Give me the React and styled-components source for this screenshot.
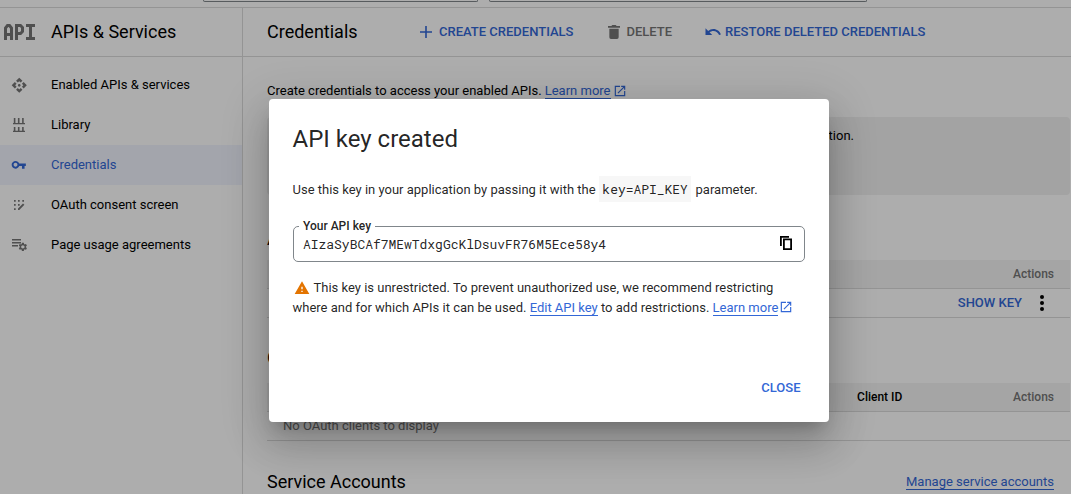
import React from "react";
import styled, { createGlobalStyle } from "styled-components";

const Global = createGlobalStyle`
  *, *::before, *::after { box-sizing: border-box; }
  html, body { margin: 0; height: 100%; overflow: hidden; background: #fff; }
  body { font-family: Roboto, "Liberation Sans", sans-serif; font-size: 13px; color: rgba(0,0,0,.87); }
  svg { display: block; flex: none; fill: currentColor; }
`;

const BLUE = "#3367d6";
const LINE = "#dadada";

const Page = styled.div`
  height: 494px;
  overflow: hidden;
  display: flex;
  flex-direction: column;
  color: #000;
`;
const TopBar = styled.div`
  height: 8px;
  flex: none;
  display: flex;
  gap: 11px;
  padding-left: 203px;
  border-bottom: 1px solid ${LINE};
`;
const TopField = styled.div`
  width: ${(p) => p.$width}px;
  height: 2px;
  border: 1px solid #80868b;
  border-top: 0;
  border-radius: 0 0 4px 4px;
`;
const Columns = styled.div`
  flex: 1;
  display: flex;
  min-height: 0;
`;
const Sidebar = styled.aside`
  width: 243px;
  flex: none;
  border-right: 1px solid ${LINE};
`;
const SideHeader = styled.header`
  height: 49px;
  display: flex;
  align-items: center;
  padding-left: 4px;
  border-bottom: 1px solid ${LINE};
  color: #757575;
`;
const Title = styled.h1`
  margin: 0;
  font-size: 18px;
  font-weight: 400;
  line-height: 24px;
  color: #000;
  width: ${(p) => (p.$width ? `${p.$width}px` : "auto")};
  padding-left: ${(p) => p.$indent || 0}px;
`;
const Nav = styled.nav`
  padding-top: 8px;
`;
const NavItem = styled.div`
  height: 40px;
  display: flex;
  align-items: center;
  gap: 23px;
  padding-left: 10px;
  color: ${(p) => (p.$active ? BLUE : "#000")};
  background: ${(p) => (p.$active ? "#f0f4fe" : "transparent")};
  svg { color: ${(p) => (p.$active ? BLUE : "#757575")}; }
`;
const NavIcon = styled.span`
  width: 18px;
  display: flex;
  justify-content: center;
`;
const Label = styled.span`
  padding-bottom: 2px;
`;
const Main = styled.main`
  flex: 1;
  min-width: 0;
`;
const Toolbar = styled.header`
  height: 49px;
  display: flex;
  align-items: center;
  padding-left: 24px;
  border-bottom: 1px solid ${LINE};
`;
const ToolButton = styled.div`
  display: flex;
  align-items: center;
  gap: ${(p) => p.$gap}px;
  margin-left: ${(p) => p.$offset}px;
  padding-bottom: 1px;
  font-weight: 500;
  white-space: nowrap;
  color: ${(p) => (p.$disabled ? "#757575" : BLUE)};
`;
const Content = styled.div`
  padding: 24px 1px 0 24px;
`;
const Intro = styled.p`
  margin: 0 0 16px;
  display: flex;
  line-height: 20px;
`;
const Link = styled.a`
  color: ${BLUE};
  line-height: 15px;
  border-bottom: 1px solid ${BLUE};
`;
const IntroLink = styled(Link)`
  height: 18px;
  margin-left: 3px;
  line-height: 20px;
`;
const LinkIcon = styled.span`
  display: inline-block;
  vertical-align: -2px;
  margin-left: 1px;
  color: ${BLUE};
`;
const IntroLinkIcon = styled(LinkIcon)`
  padding-top: 3px;
  margin-left: 2px;
`;
const Notice = styled.div`
  height: 78px;
  padding: 9px 216px 0 0;
  line-height: 20px;
  text-align: right;
  background: #f1f1f1;
  border-radius: 4px;
`;
const Section = styled.h2`
  height: ${(p) => p.$height}px;
  margin: 0;
  padding-top: ${(p) => p.$top}px;
  font-size: 18px;
  font-weight: 400;
  line-height: 24px;
`;
const TableHead = styled.div`
  height: 29px;
  display: flex;
  align-items: center;
  justify-content: flex-end;
  padding-right: 16px;
  font-size: 12px;
  font-weight: 500;
  color: #757575;
  background: #f3f3f3;
  border-bottom: 1px solid ${LINE};
`;
const HeadCell = styled.span`
  width: 156px;
  color: #000;
`;
const TableRow = styled.div`
  height: 29px;
  display: flex;
  align-items: center;
  justify-content: ${(p) => (p.$end ? "flex-end" : "flex-start")};
  padding: 0 16px;
  color: #757575;
  border-bottom: 1px solid ${LINE};
`;
const ShowKey = styled(Label)`
  color: ${BLUE};
  font-weight: 500;
  margin-right: 8px;
`;
const Kebab = styled.svg`
  color: #000;
`;
const SectionLine = styled.div`
  display: flex;
  justify-content: space-between;
  align-items: center;
  padding: 29px 16px 0 0;
`;

const Backdrop = styled.div`
  position: absolute;
  inset: 0;
  padding: 99px 0 0 269px;
  background: rgba(0, 0, 0, 0.32);
`;
const Dialog = styled.section`
  width: 560px;
  height: 323px;
  padding: 24px;
  display: flex;
  flex-direction: column;
  background: #fff;
  border-radius: 4px;
  box-shadow: 0 11px 15px -7px rgba(0,0,0,.2), 0 24px 38px 3px rgba(0,0,0,.14), 0 9px 46px 8px rgba(0,0,0,.12);
`;
const DialogTitle = styled.h2`
  margin: 0 0 0 -0.5px;
  font-size: 24px;
  font-weight: 400;
  line-height: 32px;
`;
const Paragraph = styled.p`
  margin: ${(p) => p.$top}px 0 0 -0.5px;
  line-height: 20px;
  white-space: nowrap;
`;
const Code = styled.code`
  display: inline-block;
  margin: 0 1px 0 0;
  padding: 3px 3.5px;
  font: 13px/20px "Roboto Mono", "DejaVu Sans Mono", monospace;
  letter-spacing: -0.03px;
  background: #f7f7f7;
`;
const KeyField = styled.fieldset`
  height: 43px;
  margin: 17px 0 0;
  padding: 0 10px 0 9px;
  min-width: 0;
  border: 1px solid #80868b;
  border-radius: 5px;
`;
const KeyLegend = styled.legend`
  margin-left: -4px;
  padding: 0 4px;
  font-size: 12px;
  font-weight: 500;
  line-height: 14px;
`;
const KeyLine = styled.div`
  display: flex;
  justify-content: space-between;
  align-items: center;
  height: 22px;
  font: 13px/20px "Roboto Mono", "DejaVu Sans Mono", monospace;
  letter-spacing: -0.03px;
`;
const CopyGlyph = styled.svg`
  margin: 0 2px 3px 0;
  color: #000;
`;
const WarningIcon = styled.svg`
  && { display: inline-block; }
  width: 16px;
  height: 16px;
  margin: 0 4px 0 1px;
  vertical-align: -4px;
  color: #e37400;
`;
const Actions = styled.footer`
  margin-top: auto;
  display: flex;
  justify-content: flex-end;
  padding-right: 4.5px;
  font-weight: 500;
  line-height: 20px;
  color: ${BLUE};
`;

const Icon = ({ d, size = 18 }) => (
  <svg width={size} height={size} viewBox="0 0 24 24">
    <path d={d} />
  </svg>
);

const LogoMark = styled.svg`
  && { fill: none; }
  stroke: currentColor;
  stroke-width: 3;
`;

const ApiLogo = () => (
  <LogoMark width="31" height="16" viewBox="0 0 31 16">
    <path d="M1.500 16V4L3.500 1.500H5.500L7.500 4V16M1.500 10.500H7.500" />
    <path d="M12.500 16V1.500H16.500L18.500 3.500V7.500L16.500 9.500H12.500" />
    <path d="M22 1.500H31M26.500 1.500V14.500M22 14.500H31" />
  </LogoMark>
);

const LibraryIcon = () => (
  <svg width="18" height="18" viewBox="0 0 18 18">
    <path d="M3 7h12v1.300H3zM3 14.700h12V16H3zM3.800 2h1.600v5H3.800zM7.900 2h1.600v5H7.900zM12.100 2h1.600v5h-1.600zM3.800 11h1.600v4H3.800zM7.900 11h1.600v4H7.900zM12.100 11h1.600v4h-1.600z" />
  </svg>
);

const ConsentIcon = () => (
  <svg width="18" height="18" viewBox="0 0 18 18">
    <path d="M4 4h1.700v1.700H4zM8 4h1.700v1.700H8zM12.300 4H14v1.700h-1.700zM4 8h1.700v1.700H4zM8 8h1.700v1.700H8zM4 12.300h1.700V14H4zM8 14v-1.600l5-5L14.400 8.800 9.300 14z" />
  </svg>
);

const GEAR = "M19.140 12.940c.04-.3.06-.61.06-.94s-.02-.64-.07-.94l2.030-1.580c.18-.14.23-.41.12-.61l-1.920-3.320c-.12-.22-.37-.29-.59-.22l-2.390.96c-.5-.38-1.030-.7-1.620-.94l-.36-2.540c-.04-.24-.24-.41-.48-.41h-3.840c-.24 0-.43.17-.47.41l-.36 2.540c-.59.24-1.130.57-1.620.94l-2.390-.96c-.22-.08-.47 0-.59.22L2.740 8.870c-.12.21-.08.47.12.61l2.030 1.580c-.05.3-.09.63-.09.94s.02.64.07.94l-2.030 1.580c-.18.14-.23.41-.12.61l1.920 3.320c.12.22.37.29.59.22l2.390-.96c.5.38 1.030.7 1.620.94l.36 2.540c.05.24.24.41.48.41h3.840c.24 0 .44-.17.47-.41l.36-2.540c.59-.24 1.130-.56 1.620-.94l2.390.96c.22.08.47 0 .59-.22l1.920-3.320c.12-.22.07-.47-.12-.61l-2.010-1.580zM12 16c-2.200 0-4-1.800-4-4s1.800-4 4-4 4 1.800 4 4-1.800 4-4 4z";

const AgreementIcon = () => (
  <svg width="18" height="18" viewBox="0 0 18 18">
    <path d="M2 3h9v1.500H2zM2 6h9v1.500H2zM2 9h6v1.500H2z" />
    <g transform="translate(7.700 5.700) scale(.43)">
      <path d={GEAR} />
    </g>
  </svg>
);

const ENABLED = "M14 12c0 1.100-.9 2-2 2s-2-.9-2-2 .9-2 2-2 2 .9 2 2zm-2-6l2.120 2.120 2.500-2.500L12 1 7.380 5.620l2.500 2.500L12 6zm-6 6l2.120-2.120-2.500-2.500L1 12l4.620 4.620 2.500-2.500L6 12zm12 0l-2.120 2.120 2.500 2.500L23 12l-4.620-4.620-2.500 2.500L18 12zm-6 6l-2.120-2.120-2.500 2.500L12 23l4.620-4.620-2.500-2.500L12 18z";
const KEY = "M12.650 10C11.830 7.670 9.610 6 7 6c-3.310 0-6 2.690-6 6s2.690 6 6 6c2.610 0 4.830-1.670 5.650-4H17v4h4v-4h2v-4H12.650zM7 15c-1.660 0-3-1.340-3-3s1.340-3 3-3 3 1.340 3 3-1.340 3-3 3z";
const PLUS = "M10.800 3h2.400v7.800H21v2.400h-7.800V21h-2.400v-7.800H3v-2.400h7.800z";
const TRASH = "M5 7h14v13a2.500 2.500 0 0 1-2.500 2.500h-9A2.500 2.500 0 0 1 5 20zM3 3h5l1.500-1.500h5L16 3h5v2.500H3z";
const UNDO = "M12.500 8c-2.650 0-5.050.99-6.900 2.600L2 7v9h9l-3.620-3.620c1.390-1.160 3.160-1.880 5.120-1.880 3.540 0 6.550 2.310 7.600 5.500l2.370-.78C21.080 11.030 17.150 8 12.500 8z";
const EXTERNAL = "M19 19H5V5h7V3H3v18h18v-9h-2v7zM14 3v2h3.590l-9.830 9.830 1.410 1.410L19 6.410V10h2V3h-7z";

const navItems = [
  { label: "Enabled APIs & services", icon: <Icon d={ENABLED} size={16.5} /> },
  { label: "Library", icon: <LibraryIcon /> },
  { label: "Credentials", icon: <Icon d={KEY} size={15.5} />, active: true },
  { label: "OAuth consent screen", icon: <ConsentIcon /> },
  { label: "Page usage agreements", icon: <AgreementIcon /> },
];

export default function App() {
  return (
    <>
      <Global />
      <Page>
        <TopBar>
          <TopField $width={275} />
          <TopField $width={378} />
        </TopBar>
        <Columns>
          <Sidebar>
            <SideHeader>
              <ApiLogo />
              <Title $indent={16}>APIs &amp; Services</Title>
            </SideHeader>
            <Nav>
              {navItems.map((item) => (
                <NavItem key={item.label} $active={item.active}>
                  <NavIcon>{item.icon}</NavIcon>
                  <Label>{item.label}</Label>
                </NavItem>
              ))}
            </Nav>
          </Sidebar>
          <Main>
            <Toolbar>
              <Title $width={150}>Credentials</Title>
              <ToolButton $gap={5} $offset={1}><Icon d={PLUS} size={16} />CREATE CREDENTIALS</ToolButton>
              <ToolButton $gap={4.5} $offset={32.5} $disabled><Icon d={TRASH} size={16} />DELETE</ToolButton>
              <ToolButton $gap={3} $offset={32}><Icon d={UNDO} />RESTORE DELETED CREDENTIALS</ToolButton>
            </Toolbar>
            <Content>
              <Intro>
                Create credentials to access your enabled APIs.
                <IntroLink>Learn more</IntroLink>
                <IntroLinkIcon><Icon d={EXTERNAL} size={14} /></IntroLinkIcon>
              </Intro>
              <Notice>Remember to configure the OAuth consent screen with information.</Notice>
              <Section $height={65} $top={32}>API Keys</Section>
              <TableHead>Actions</TableHead>
              <TableRow $end>
                <ShowKey>SHOW KEY</ShowKey>
                <Kebab width="24" height="24" viewBox="0 0 24 24">
                  <circle cx="12" cy="6" r="2" />
                  <circle cx="12" cy="12" r="2" />
                  <circle cx="12" cy="18" r="2" />
                </Kebab>
              </TableRow>
              <Section $height={65} $top={28}>OAuth 2.0 Client IDs</Section>
              <TableHead><HeadCell>Client ID</HeadCell>Actions</TableHead>
              <TableRow><Label>No OAuth clients to display</Label></TableRow>
              <SectionLine>
                <Section $height={24} $top={0}>Service Accounts</Section>
                <Link>Manage service accounts</Link>
              </SectionLine>
            </Content>
          </Main>
        </Columns>
      </Page>
      <Backdrop>
        <Dialog role="dialog">
          <DialogTitle>API key created</DialogTitle>
          <Paragraph $top={21}>
            Use this key in your application by passing it with the <Code>key=API_KEY</Code> parameter.
          </Paragraph>
          <KeyField>
            <KeyLegend>Your API key</KeyLegend>
            <KeyLine>
              AIzaSyBCAf7MEwTdxgGcKlDsuvFR76M5Ece58y4
              <CopyGlyph width="12" height="14" viewBox="0 0 12 14">
                <path d="M0 0h9v1.800H1.800V10H0zM3 2.500h9V14H3zM4.800 4.300v7.900h5.400V4.300z" fillRule="evenodd" />
              </CopyGlyph>
            </KeyLine>
          </KeyField>
          <Paragraph $top={16}>
            <WarningIcon viewBox="0 0 24 24">
              <path d="M1 21h22L12 2 1 21zm12-3h-2v-2h2v2zm0-4h-2v-4h2v4z" />
            </WarningIcon>
            This key is unrestricted. To prevent unauthorized use, we recommend restricting
            <br />
            where and for which APIs it can be used. <Link>Edit API key</Link> to add restrictions. <Link>Learn more</Link>
            <LinkIcon><Icon d={EXTERNAL} size={14} /></LinkIcon>
          </Paragraph>
          <Actions>CLOSE</Actions>
        </Dialog>
      </Backdrop>
    </>
  );
}
